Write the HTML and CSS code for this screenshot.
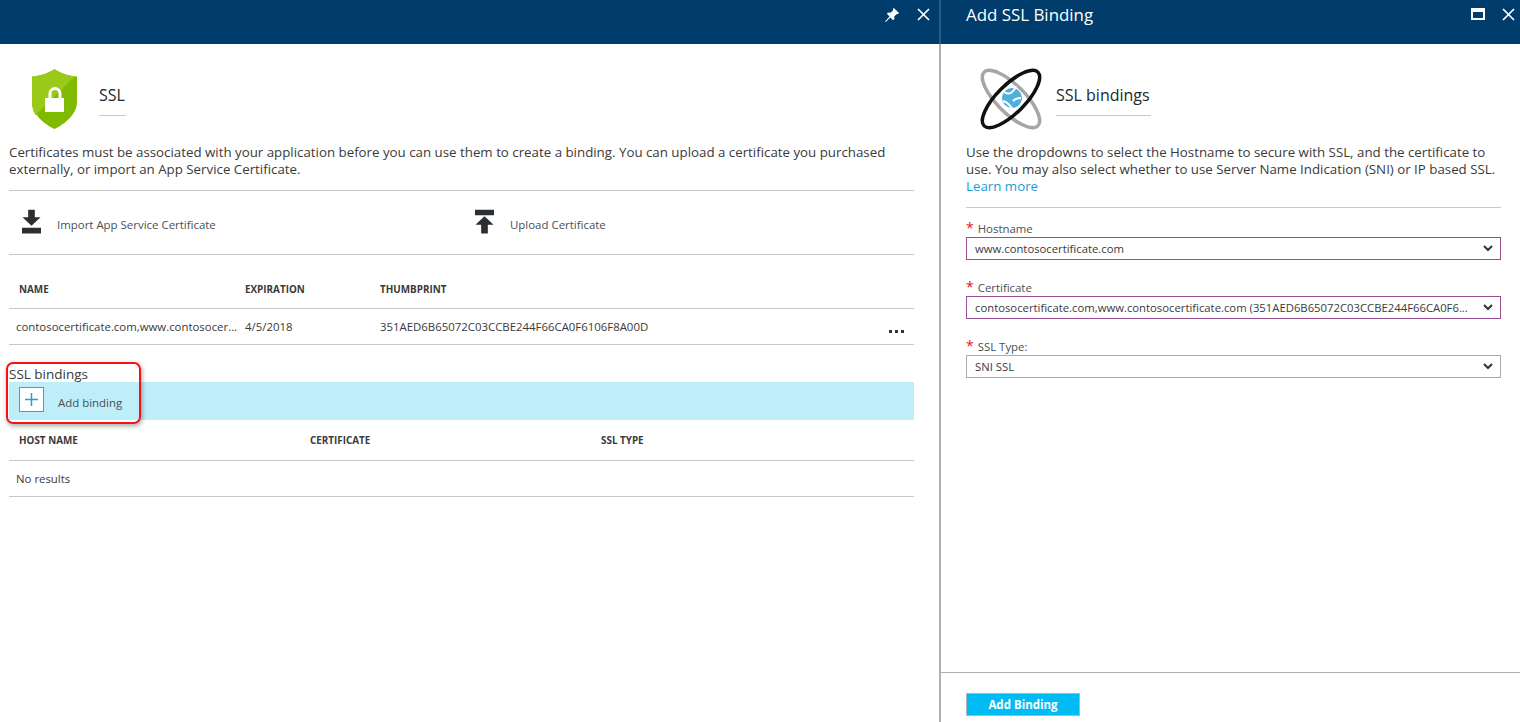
FILE: index.html
```html
<!DOCTYPE html>
<html lang="en">
<head>
    <meta charset="UTF-8">
    <meta name="viewport" content="width=device-width, initial-scale=1.0">
    <title>SSL</title>
    <link rel="stylesheet" href="styles.css">
</head>
<body>

<div class="blades">

    <!-- SSL blade -->
    <section class="blade blade-left">
        <header class="topbar">
            <div class="topbar-title"></div>
            <div class="topbar-actions">
                <svg class="pin" viewBox="0 0 14 14" width="14" height="14"><path d="M8.800 0 14 5 12.800 6.200 11.800 5.900 9.200 8.500 9.500 11 8 12.200 5.300 9.400 .8 14 0 13.400 4.500 8.500 1.900 5.800 3 4.500 5.500 4.800 8.200 2.300 7.800 1Z" fill="#fff"/></svg>
                <svg class="close" viewBox="0 0 13 13" width="13" height="13"><path d="M1 1 12 12M12 1 1 12" stroke="#fff" stroke-width="1.7" fill="none"/></svg>
            </div>
        </header>
        <div class="blade-body">
            <div class="blade-head">
                <svg class="shield" viewBox="0 0 46 60" width="46" height="60">
                    <path d="M22.500 0C26 3 36 7 45 7.500V33C45 45 33 55 22.500 60 12 55 0 45 0 33V7.500C9 7 19 3 22.500 0Z" fill="#7fba00"/>
                    <path d="M22.500 0C19 3 9 7 0 7.500V33C0 39 1.500 43 3.500 46L43 7.300C35 7 26 3 22.500 0Z" fill="#9ac919"/>
                    <path d="M18 29V24.500a5 5 0 0 1 10 0V29" fill="none" stroke="#fff" stroke-width="3"/>
                    <rect x="13" y="29" width="19" height="14" fill="#fff"/>
                </svg>
                <div class="head-title">SSL</div>
            </div>
            <p class="desc">Certificates must be associated with your application before you can use them to create a binding. You can upload a certificate you purchased externally, or import an App Service Certificate.</p>
            <div class="commands">
                <div class="command command-import">
                    <svg viewBox="0 0 20 25" width="19" height="25"><path d="M6.500 0h7v8h6L10 17 .5 8h6ZM0 19h20v6H0Z" fill="#2b2f33"/></svg>
                    <span>Import App Service Certificate</span>
                </div>
                <div class="command">
                    <svg viewBox="0 0 20 25" width="19" height="25"><path d="M0 0h20v6H0ZM10 7l9.500 9h-6v9h-7v-9h-6Z" fill="#2b2f33"/></svg>
                    <span>Upload Certificate</span>
                </div>
            </div>

            <div class="grid-head certs">
                <div>NAME</div>
                <div>EXPIRATION</div>
                <div>THUMBPRINT</div>
            </div>
            <div class="grid-row certs">
                <div class="cell-first">contosocertificate.com,www.contosocer...</div>
                <div>4/5/2018</div>
                <div>351AED6B65072C03CCBE244F66CA0F6106F8A00D</div>
                <div class="dots"><i></i><i></i><i></i></div>
            </div>

            <div class="bindings">
                <div class="bindings-title">SSL bindings</div>
                <div class="add-bar">
                    <div class="plus-box">
                        <svg viewBox="0 0 13 13" width="13" height="13"><path d="M6.500 0v13M0 6.500h13" stroke="#10a5e8" stroke-width="1.500"/></svg>
                    </div>
                    <span>Add binding</span>
                </div>
                <div class="highlight"></div>
            </div>

            <div class="grid-head hosts">
                <div>HOST NAME</div>
                <div>CERTIFICATE</div>
                <div>SSL TYPE</div>
            </div>
            <div class="grid-row empty">
                <div class="cell-first">No results</div>
            </div>
        </div>
    </section>

    <!-- Add SSL Binding blade -->
    <section class="blade blade-right">
        <header class="topbar">
            <div class="topbar-title">Add SSL Binding</div>
            <div class="topbar-actions">
                <svg viewBox="0 0 14 12" width="14" height="12"><path d="M0 0h14v12H0ZM2 4v6h10V4Z" fill="#fff" fill-rule="evenodd"/></svg>
                <svg class="close" viewBox="0 0 13 13" width="13" height="13"><path d="M1 1 12 12M12 1 1 12" stroke="#fff" stroke-width="1.7" fill="none"/></svg>
            </div>
        </header>
        <div class="blade-body">
            <div class="blade-head">
                <svg class="atom" viewBox="0 0 62 62" width="62" height="62">
                    <ellipse cx="31" cy="31" rx="38" ry="14" transform="rotate(45 31 31)" fill="none" stroke="#a6a6a6" stroke-width="3.500"/>
                    <circle cx="32" cy="30" r="10" fill="#4fb0dc"/>
                    <path d="M24 24c4 3 9 2 12-6M23 33c5 1 7 5 9 7M33 33c3-3 6-3 8-3" fill="none" stroke="#fff" stroke-width="2"/>
                    <ellipse cx="31" cy="31" rx="38" ry="14" transform="rotate(-45 31 31)" fill="none" stroke="#111" stroke-width="3.500"/>
                </svg>
                <div class="head-title">SSL bindings</div>
            </div>
            <p class="desc">Use the dropdowns to select the Hostname to secure with SSL, and the certificate to use. You may also select whether to use Server Name Indication (SNI) or IP based SSL. <a href="#">Learn more</a></p>
            <div class="form">
                <div class="field">
                    <label><span class="req">*</span>Hostname</label>
                    <div class="select changed">
                        <span>www.contosocertificate.com</span>
                        <svg viewBox="0 0 10 7" width="10" height="7"><path d="M1 1 5 5 9 1" fill="none" stroke="#333" stroke-width="2"/></svg>
                    </div>
                </div>
                <div class="field">
                    <label><span class="req">*</span>Certificate</label>
                    <div class="select changed">
                        <span>contosocertificate.com,www.contosocertificate.com (351AED6B65072C03CCBE244F66CA0F6...</span>
                        <svg viewBox="0 0 10 7" width="10" height="7"><path d="M1 1 5 5 9 1" fill="none" stroke="#333" stroke-width="2"/></svg>
                    </div>
                </div>
                <div class="field">
                    <label><span class="req">*</span>SSL Type:</label>
                    <div class="select">
                        <span>SNI SSL</span>
                        <svg viewBox="0 0 10 7" width="10" height="7"><path d="M1 1 5 5 9 1" fill="none" stroke="#333" stroke-width="2"/></svg>
                    </div>
                </div>
            </div>
        </div>
        <footer class="blade-foot">
            <button class="primary">Add Binding</button>
        </footer>
    </section>

</div>

</body>
</html>
```

FILE: styles.css
```css
* {
    box-sizing: border-box;
}
html, body {
    height: 100%;
}
body {
    margin: 0;
    font-family: "Open Sans", "Noto Sans", sans-serif;
    font-size: 11.4px;
    color: #3a3a3a;
    background-color: #fff;
    overflow: hidden;
}
.blades {
    display: flex;
    height: 722px;
}
.blade {
    display: flex;
    flex-direction: column;
}
.blade-left {
    width: 939px;
    flex: none;
}
.blade-right {
    flex: 1;
    border-left: 2px solid #b0b0b0;
}
.topbar {
    height: 44px;
    flex: none;
    background-color: #003c6c;
    display: flex;
    justify-content: space-between;
    color: #fff;
}
.blade-right .topbar {
    margin-left: -2px;
    border-left: 2px solid #2a5a88;
    padding-left: 25px;
}
.topbar-title {
    font-size: 16.9px;
    line-height: 30px;
}
.topbar-actions {
    display: flex;
    align-items: flex-start;
    padding-top: 8px;
    padding-right: 9px;
    gap: 18px;
}
.blade-right .topbar-actions {
    padding-right: 5px;
    gap: 17px;
}

.blade-body {
    flex: 1;
    padding: 0 25px 0 9px;
}
.blade-head {
    height: 60px;
    margin-top: 25px;
    padding-left: 23px;
    display: flex;
    align-items: flex-start;
    gap: 21px;
}
.head-title {
    margin-top: 16px;
    height: 31px;
    padding-right: 1px;
    border-bottom: 1px solid #c8c8c8;
    font-size: 16px;
    line-height: 20px;
    color: #22282e;
}
.desc {
    margin: 15px 0 0;
    font-size: 13.3px;
    line-height: 17px;
    color: #3a3a3a;
}
.desc a {
    color: #1d9ad6;
    text-decoration: none;
}

.commands {
    display: flex;
    height: 65px;
    margin-top: 12px;
    border-top: 1px solid #c8c8c8;
    border-bottom: 1px solid #c8c8c8;
}
.command {
    display: flex;
    align-items: center;
    gap: 16px;
    padding-left: 13px;
    font-size: 11.45px;
    color: #4a4f55;
}
.command span {
    margin-top: 3px;
}
.command svg {
    margin-top: -2px;
}
.command-import {
    width: 453px;
}

.grid-head, .grid-row {
    display: grid;
    align-items: center;
}
.grid-head {
    height: 54px;
    padding-top: 14px;
    padding-left: 10px;
    border-bottom: 1px solid #c8c8c8;
    font-size: 9.9px;
    font-weight: 700;
    color: #3a3a3a;
}
.grid-row {
    height: 36px;
    padding-left: 7px;
    border-bottom: 1px solid #c8c8c8;
}
.certs {
    grid-template-columns: 226px 135px 1fr;
}
.grid-row.certs {
    grid-template-columns: 229px 135px 1fr 24px;
}
.hosts {
    grid-template-columns: 291px 291px 1fr;
}
.dots {
    display: flex;
    gap: 3px;
    padding-top: 10px;
    margin-left: -1px;
}
.dots i {
    width: 3px;
    height: 3px;
    background-color: #333;
}

.bindings {
    position: relative;
    margin-top: 20px;
}
.bindings-title {
    height: 17px;
    font-size: 13.5px;
    line-height: 19px;
    color: #3a3a3a;
}
.add-bar {
    height: 38px;
    display: flex;
    align-items: center;
    gap: 14px;
    padding-left: 10px;
    background-color: #bdeefa;
    font-size: 11.45px;
    color: #4a4f55;
}
.add-bar span {
    margin-top: 2px;
}
.plus-box {
    width: 25px;
    height: 25px;
    margin-top: -3px;
    display: flex;
    align-items: center;
    justify-content: center;
    background-color: #fff;
    border: 1px solid #2aa8e0;
}
/* red callout drawn over the screenshot */
.highlight {
    position: absolute;
    left: -3px;
    top: -3px;
    width: 135px;
    height: 62px;
    border: 2px solid #f01414;
    border-radius: 7px;
    box-shadow: 1px 2px 5px rgba(0, 0, 0, 0.35);
}
.hosts.grid-head {
    height: 41px;
    padding-top: 0;
}
.empty {
    height: 36px;
}

.blade-right .blade-body {
    padding: 0 19px 0 25px;
}
.blade-right .blade-head {
    padding-left: 14px;
    margin-top: 24px;
    height: 62px;
    gap: 14px;
}
.blade-right .head-title {
    margin-top: 17px;
}
.blade-right .desc {
    margin-top: 14px;
    padding-bottom: 12px;
    border-bottom: 1px solid #c8c8c8;
    margin-bottom: 12px;
}
.form {
    display: flex;
    flex-direction: column;
    gap: 19px;
}
.field label {
    display: block;
    height: 17px;
    line-height: 17px;
    color: #4a4f55;
}
.req {
    color: #e81123;
    font-size: 14px;
    margin-right: 4px;
    line-height: 10px;
}
.select {
    height: 23px;
    display: flex;
    align-items: center;
    justify-content: space-between;
    padding: 0 7px 0 8px;
    border: 1px solid #ababab;
    font-size: 11.3px;
    white-space: nowrap;
    color: #3a3a3a;
}
.select.changed {
    border-color: #9b4f96;
}
.select svg {
    flex: none;
}

.blade-foot {
    height: 50px;
    flex: none;
    border-top: 1px solid #b0b0b0;
    padding: 20px 0 0 25px;
}
.primary {
    display: block;
    width: 114px;
    height: 23px;
    padding: 0;
    border: 1px solid #a9b7c0;
    background-color: #00bcf2;
    color: #fff;
    font-family: inherit;
    font-size: 11.5px;
    font-weight: 700;
}
```
